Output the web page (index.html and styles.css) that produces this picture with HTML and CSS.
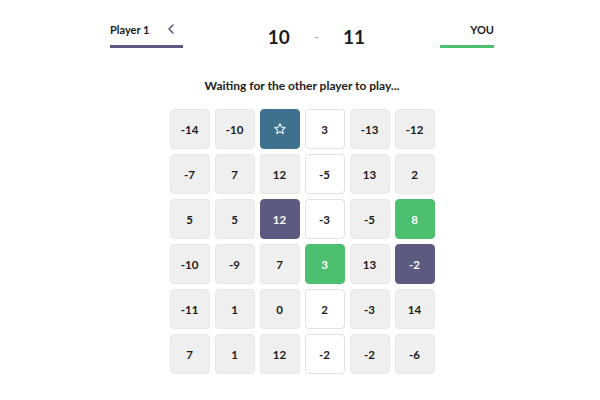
FILE: index.html
```html
<!DOCTYPE html>
<html>
<head>
<meta charset="utf-8">
<link rel="stylesheet" href="styles.css">
</head>
<body>
<div class="page">
  <header class="top">
    <div class="side left">
      <div class="label-row"><span class="name">Player 1</span><span class="chev"><svg width="8" height="10" viewBox="0 0 8 10"><path d="M6 1 L2 5 L6 9" fill="none" stroke="#5c5a80" stroke-width="1.6" stroke-linecap="round" stroke-linejoin="round"/></svg></span></div>
      <div class="bar bar-p1"></div>
    </div>
    <div class="score">
      <span class="num">10</span>
      <span class="dash">-</span>
      <span class="num">11</span>
    </div>
    <div class="side right">
      <div class="label-row end"><span class="name">YOU</span></div>
      <div class="bar bar-you"></div>
    </div>
  </header>
  <p class="status">Waiting for the other player to play...</p>
  <div class="grid">
    <div class="cell">-14</div><div class="cell">-10</div><div class="cell star"><svg width="14" height="14" viewBox="0 0 24 24"><path d="M12 2.8 L14.7 8.6 L21 9.3 L16.3 13.6 L17.6 19.9 L12 16.7 L6.4 19.9 L7.7 13.6 L3 9.3 L9.3 8.6 Z" fill="none" stroke="#fff" stroke-width="1.8" stroke-linejoin="round"/></svg></div><div class="cell open">3</div><div class="cell">-13</div><div class="cell">-12</div>
    <div class="cell">-7</div><div class="cell">7</div><div class="cell">12</div><div class="cell open">-5</div><div class="cell">13</div><div class="cell">2</div>
    <div class="cell">5</div><div class="cell">5</div><div class="cell p1">12</div><div class="cell open">-3</div><div class="cell">-5</div><div class="cell you">8</div>
    <div class="cell">-10</div><div class="cell">-9</div><div class="cell">7</div><div class="cell you">3</div><div class="cell">13</div><div class="cell p1">-2</div>
    <div class="cell">-11</div><div class="cell">1</div><div class="cell">0</div><div class="cell open">2</div><div class="cell">-3</div><div class="cell">14</div>
    <div class="cell">7</div><div class="cell">1</div><div class="cell">12</div><div class="cell open">-2</div><div class="cell">-2</div><div class="cell">-6</div>
  </div>
</div>
</body>
</html>
```

FILE: styles.css
```css
html, body {
  margin: 0;
  padding: 0;
  background: #fff;
}
body {
  font-family: Lato, "Open Sans", sans-serif;
  color: #1b1b1b;
  width: 600px;
  height: 400px;
  overflow: hidden;
}
.page {
  width: 384px;
  margin-left: 110px;
  display: flex;
  flex-direction: column;
  align-items: center;
}
.top {
  width: 384px;
  display: flex;
  justify-content: space-between;
  padding-top: 22px;
  height: 28px;
}
.side {
  width: 73px;
  display: flex;
  flex-direction: column;
}
.right {
  width: 54px;
}
.label-row {
  display: flex;
  justify-content: space-between;
  align-items: center;
  height: 14px;
}
.label-row.end {
  justify-content: flex-end;
}
.name {
  font-size: 11px;
  font-weight: 700;
}
.chev {
  display: flex;
  margin-right: 8px;
}
.bar {
  height: 3px;
  margin-top: 9px;
}
.bar-p1 { background: #5c5a80; }
.bar-you { background: #4cc06e; }
.score {
  display: flex;
  align-items: center;
  margin-top: 3px;
  height: 22px;
  margin-left: 10px;
}
.num {
  font-size: 19px;
  font-weight: 700;
}
.dash {
  color: #aaa;
  font-size: 14px;
  margin: 0 24px;
}
.status {
  margin: 28px 0 0 0;
  font-size: 12px;
  font-weight: 700;
  height: 16px;
}
.grid {
  margin-top: 15px;
  display: grid;
  grid-template-columns: repeat(6, 40px);
  grid-auto-rows: 40px;
  gap: 5px;
}
.cell {
  box-sizing: border-box;
  background: #efefef;
  border: 1px solid #e8e8e8;
  border-radius: 4px;
  display: flex;
  align-items: center;
  justify-content: center;
  font-size: 11.5px;
  font-weight: 700;
}
.cell.open {
  background: #fff;
  border-color: #e2e2e2;
}
.cell.star {
  background: #3d718d;
  border-color: #3d718d;
}
.cell.p1 {
  background: #5c5a80;
  border-color: #5c5a80;
  color: #fff;
}
.cell.you {
  background: #4cc06e;
  border-color: #4cc06e;
  color: #fff;
}
```
